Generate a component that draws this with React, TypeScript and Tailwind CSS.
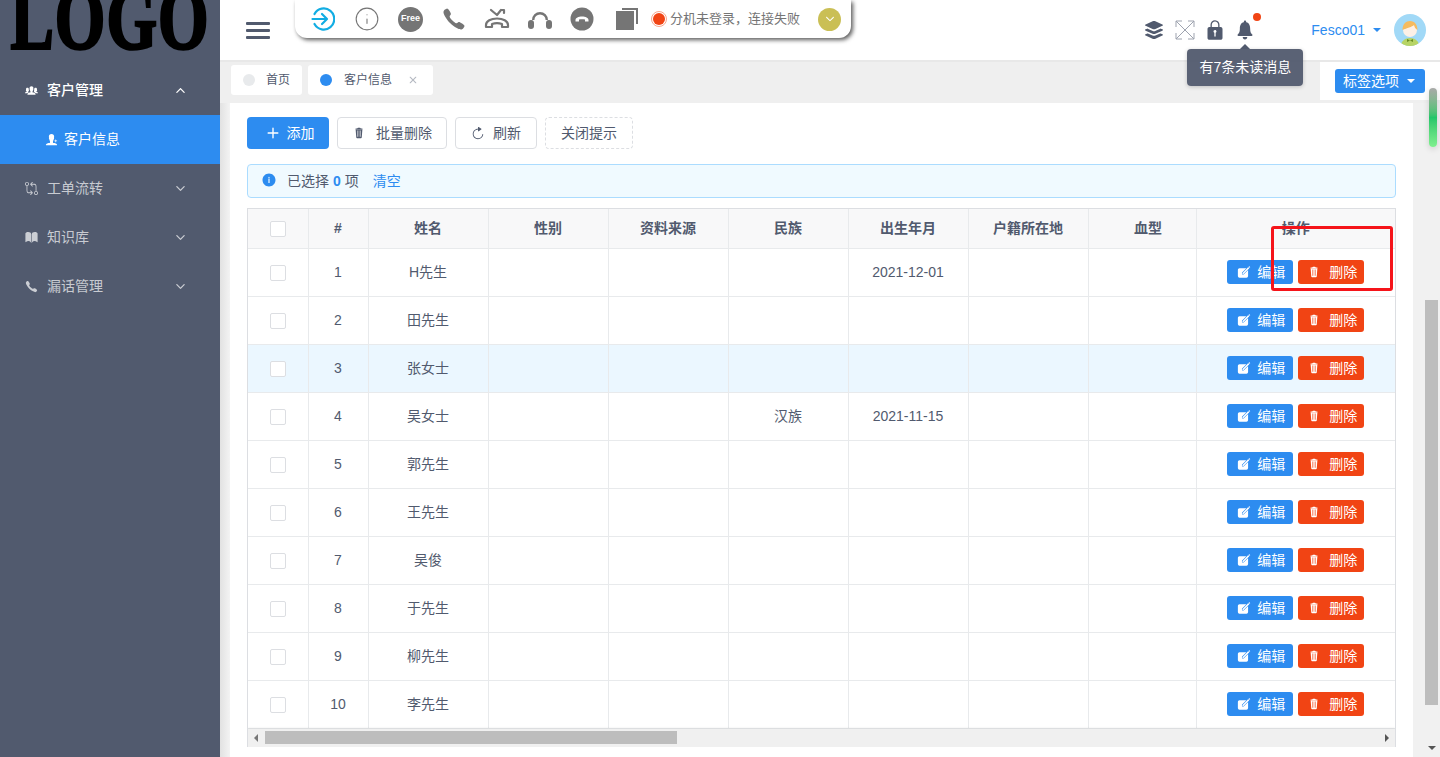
import { Info, Copy } from 'lucide-react';
import {
  IoIosAdd,
  IoIosApps,
  IoIosArrowDown,
  IoIosArrowUp,
  IoIosBook,
  IoIosCall,
  IoIosClose,
  IoIosCreate,
  IoIosGitCompare,
  IoIosInformationCircle,
  IoIosLock,
  IoIosNotifications,
  IoIosPeople,
  IoIosPersonAdd,
  IoIosRefresh,
  IoIosTrash,
  IoMdArrowDropdown,
} from 'react-icons/io';

const rows = [
  { id: 1, name: 'H先生', nation: '', birth: '2021-12-01' },
  { id: 2, name: '田先生', nation: '', birth: '' },
  { id: 3, name: '张女士', nation: '', birth: '' },
  { id: 4, name: '吴女士', nation: '汉族', birth: '2021-11-15' },
  { id: 5, name: '郭先生', nation: '', birth: '' },
  { id: 6, name: '王先生', nation: '', birth: '' },
  { id: 7, name: '吴俊', nation: '', birth: '' },
  { id: 8, name: '于先生', nation: '', birth: '' },
  { id: 9, name: '柳先生', nation: '', birth: '' },
  { id: 10, name: '李先生', nation: '', birth: '' },
];

const menu = [
  { label: '工单流转', icon: IoIosGitCompare },
  { label: '知识库', icon: IoIosBook },
  { label: '漏话管理', icon: IoIosCall },
];

const cell = 'border-r border-b border-[#e8eaec] text-center';
const nameShadow = 'relative z-10 shadow-[3px_0_5px_-1px_rgba(0,0,0,0.16)]';
const opShadow = 'relative z-10 shadow-[-3px_0_5px_-1px_rgba(0,0,0,0.16)] bg-clip-padding';

function Checkbox() {
  return <span className="inline-block w-4 h-4 align-middle bg-white border border-[#dcdee2] rounded-[2px]" />;
}

function Sidebar() {
  return (
    <aside className="w-[220px] shrink-0 h-full bg-[#515a6e]">
      <div className="h-[66px] overflow-hidden flex justify-center">
        <span className="font-['Liberation_Serif',serif] font-bold text-black text-[65px] leading-[56px] h-[56px] tracking-[1px] scale-y-[1.38] origin-bottom [-webkit-text-stroke:2px_black]">
          LOGO
        </span>
      </div>
      <div className="h-[49px] flex items-center pl-6 pr-[33px] text-white font-medium">
        <IoIosPeople size={15} />
        <span className="ml-2 flex-1">客户管理</span>
        <IoIosArrowUp size={13} />
      </div>
      <div className="h-[49px] flex items-center pl-[44px] bg-[#2d8cf0] text-white">
        <IoIosPersonAdd size={15} />
        <span className="ml-[5px]">客户信息</span>
      </div>
      {menu.map((item) => (
        <div key={item.label} className="h-[49px] flex items-center pl-6 pr-[33px] text-white/70">
          <item.icon size={15} />
          <span className="ml-2 flex-1">{item.label}</span>
          <IoIosArrowDown size={13} />
        </div>
      ))}
    </aside>
  );
}

function SoftPhoneBar() {
  return (
    <div className="self-start flex items-center w-[556px] h-[38px] ml-[25px] pl-[6px] bg-white rounded-b-[12px] shadow-[2px_2px_4px_rgba(0,0,0,0.65)] text-[#757575]">
      <span className="w-[44px] flex justify-center">
        <svg width="24" height="24" viewBox="0 0 24 24" fill="none" stroke="#12ade3" strokeWidth="2.2" strokeLinecap="round" strokeLinejoin="round">
          <path d="M3.5 7a10.5 10.5 0 1 1 0 10" />
          <path d="M1.5 12h14M11 7l5 5-5 5" />
        </svg>
      </span>
      <span className="w-[44px] flex justify-center">
        <Info size={26} strokeWidth={1} />
      </span>
      <span className="w-[43px] flex justify-center">
        <span className="w-[25px] h-[25px] rounded-full bg-[#757575] text-white text-[9px] font-bold flex items-center justify-center">Free</span>
      </span>
      <span className="w-[43px] flex justify-center">
        <IoIosCall size={28} />
      </span>
      <span className="w-[44px] flex justify-center">
        <svg width="26" height="24" viewBox="0 0 26 24" fill="none" stroke="currentColor" strokeWidth="2.2" strokeLinecap="round" strokeLinejoin="round">
          <path d="M2 18c0-4 5-6.5 11-6.5s11 2.500 11 6.500v2h-6v-3c-3-1-7-1-10 0v3H2z" />
          <path d="M7 3l6 5 4-5M17 3h3v3" />
        </svg>
      </span>
      <span className="w-[42px] flex justify-center">
        <svg width="26" height="24" viewBox="0 0 26 24" fill="currentColor">
          <path d="M5 13a8 8 0 0 1 16 0h-2.400a5.600 5.600 0 0 0-11.200 0z" />
          <rect x="1" y="13" width="6" height="9" rx="3" />
          <rect x="19" y="13" width="6" height="9" rx="3" />
        </svg>
      </span>
      <span className="w-[41px] flex justify-center">
        <svg width="24" height="24" viewBox="0 0 24 24">
          <circle cx="12" cy="12" r="11.500" fill="currentColor" />
          <path d="M5.500 13c0-2 3-3.500 6.500-3.500s6.500 1.500 6.500 3.500v1.500h-3.500v-2c-2-.5-4-.5-6 0v2H5.500z" fill="#fff" />
        </svg>
      </span>
      <span className="w-[49px] flex justify-center">
        <svg width="22" height="22" viewBox="0 0 22 22" fill="currentColor">
          <path d="M6 0h16v16h-2V2H6z" />
          <rect x="0" y="3" width="18" height="19" />
        </svg>
      </span>
      <span className="ml-[2px] w-3 h-3 rounded-full bg-[#f14414] outline outline-1 outline-offset-[1px] outline-[#f9a58d]" />
      <span className="ml-[5px] text-[13px] w-[140px] whitespace-nowrap">分机未登录，连接失败</span>
      <span className="ml-[8px] w-[23px] h-[23px] rounded-full bg-[#cabf55] flex items-center justify-center text-white">
        <IoIosArrowDown size={12} />
      </span>
    </div>
  );
}

function Avatar() {
  return (
    <svg width="32" height="32" viewBox="0 0 32 32" className="rounded-full">
      <rect width="32" height="32" fill="#a1d9f7" />
      <path d="M7 32c0-5 4-8 9-8s9 3 9 8z" fill="#b7d465" />
      <circle cx="16" cy="16" r="7" fill="#fdf0e6" />
      <path d="M8.500 16c0-6 3.500-9 7.500-9 5 0 7.500 4 7.500 9-2-1-3-3-3.500-5-2 2-7 3-11.500 5z" fill="#f5bb5f" />
      <path d="M13 25l3 1.500 3-1.500v3l-3-1.500-3 1.500z" fill="#6b8e23" />
    </svg>
  );
}

function Header() {
  return (
    <header className="relative z-30 h-[62px] shrink-0 flex items-center bg-white border-b-2 border-[#e8e8e8]">
      <div className="ml-[26px] w-[24px] flex flex-col gap-[4px]">
        <span className="h-[3px] bg-[#515a6e] rounded-[1px]" />
        <span className="h-[3px] bg-[#515a6e] rounded-[1px]" />
        <span className="h-[3px] bg-[#515a6e] rounded-[1px]" />
      </div>
      <SoftPhoneBar />
      <div className="ml-auto flex items-center text-[#515a6e]">
        <IoIosApps size={24} />
        <svg width="20" height="20" viewBox="0 0 20 20" fill="none" stroke="#9ea3af" strokeWidth="1" className="ml-[9px]">
          <path d="M1 1l18 18M19 1L1 19M1 7V1h6M13 1h6v6M1 13v6h6M19 13v6h-6" />
        </svg>
        <IoIosLock size={24} className="ml-[8px]" />
        <div className="relative ml-[6px]">
          <IoIosNotifications size={24} />
          <span className="absolute -top-[5px] right-[-4px] w-2 h-2 rounded-full bg-[#f14414]" />
          <div className="absolute top-[31px] left-1/2 -translate-x-1/2 w-[116px] h-[37px] flex items-center justify-center rounded-[4px] bg-[#515a6e]/95 text-white text-[14px] whitespace-nowrap shadow-[0_1px_4px_rgba(0,0,0,0.2)]">
            有7条未读消息
            <span className="absolute -top-[5px] left-1/2 -ml-[5px] w-0 h-0 border-x-[5px] border-x-transparent border-b-[5px] border-b-[#515a6e]" />
          </div>
        </div>
        <span className="ml-[54px] text-[14px] text-[#2d8cf0]">Fesco01</span>
        <IoMdArrowDropdown size={16} className="ml-[4px] text-[#2d8cf0]" />
        <span className="ml-[9px] mr-[14px] flex">
          <Avatar />
        </span>
      </div>
    </header>
  );
}

function TabsBar() {
  return (
    <div className="h-[41px] shrink-0 flex items-start bg-[#efefef]">
      <div className="mt-[3px] ml-[11px] flex gap-[6px] text-[12px] text-[#515a6e]">
        <div className="w-[71px] h-[30px] flex items-center pl-3 bg-white rounded-[3px]">
          <span className="w-3 h-3 rounded-full bg-[#e8eaec]" />
          <span className="ml-[11px]">首页</span>
        </div>
        <div className="w-[125px] h-[30px] flex items-center pl-3 bg-white rounded-[3px]">
          <span className="w-3 h-3 rounded-full bg-[#2d8cf0]" />
          <span className="ml-3">客户信息</span>
          <IoIosClose size={18} className="ml-3 text-[#b5b9c2]" />
        </div>
      </div>
      <div className="ml-auto w-[120px] h-[38px] flex items-center pl-[15px] bg-white">
        <button className="w-[90px] h-[24px] flex items-center pl-2 rounded-[3px] bg-[#2d8cf0] text-white text-[14px]">
          标签选项
          <IoMdArrowDropdown size={16} className="ml-[4px]" />
        </button>
      </div>
    </div>
  );
}

function CustomerTable() {
  return (
    <div className="mt-[10px] border-t border-l border-r border-[#dcdee2] text-[14px] text-[#515a6e] overflow-hidden">
      <table className="w-full table-fixed border-collapse-separate">
        <colgroup>
          <col className="w-[60px]" />
          <col className="w-[60px]" />
          <col className="w-[120px]" />
          <col className="w-[120px]" />
          <col className="w-[120px]" />
          <col className="w-[120px]" />
          <col className="w-[120px]" />
          <col className="w-[120px]" />
          <col className="w-[108px]" />
          <col className="w-[199px]" />
        </colgroup>
        <thead>
          <tr className="h-[39px] bg-[#f8f8f9] font-bold">
            <th className={cell}><Checkbox /></th>
            <th className={cell}>#</th>
            <th className={`${cell} ${nameShadow} bg-[#f8f8f9]`}>姓名</th>
            <th className={cell}>性别</th>
            <th className={cell}>资料来源</th>
            <th className={cell}>民族</th>
            <th className={cell}>出生年月</th>
            <th className={cell}>户籍所在地</th>
            <th className={`${cell} pl-3`}>血型</th>
            <th className={`${cell} ${opShadow} bg-[#f8f8f9] border-r-0`}>操作</th>
          </tr>
        </thead>
        <tbody>
          {rows.map((row) => {
            const bg = row.id === 3 ? 'bg-[#ebf7ff]' : 'bg-white';
            return (
              <tr key={row.id} className={`h-[48px] ${bg}`}>
                <td className={cell}><Checkbox /></td>
                <td className={cell}>{row.id}</td>
                <td className={`${cell} ${nameShadow} ${bg}`}>{row.name}</td>
                <td className={cell} />
                <td className={cell} />
                <td className={cell}>{row.nation}</td>
                <td className={cell}>{row.birth}</td>
                <td className={cell} />
                <td className={cell} />
                <td className={`${cell} ${opShadow} ${bg} border-r-0`}>
                  <div className="flex justify-center gap-[5px]">
                    <button className="w-[66px] h-[24px] flex items-center pl-[10px] rounded-[3px] bg-[#2d8cf0] text-white">
                      <IoIosCreate size={14} />
                      <span className="ml-[6px]">编辑</span>
                    </button>
                    <button className="w-[66px] h-[24px] flex items-center pl-[9px] rounded-[3px] bg-[#f14414] text-white">
                      <IoIosTrash size={14} />
                      <span className="ml-[8px]">删除</span>
                    </button>
                  </div>
                </td>
              </tr>
            );
          })}
        </tbody>
      </table>
      <div className="h-[18px] flex items-center bg-[#f0f0f0] relative z-20 shadow-[0_-1px_2px_rgba(0,0,0,0.08)]">
        <span className="ml-[6px] w-0 h-0 border-y-[4px] border-y-transparent border-r-[4px] border-r-[#777]" />
        <span className="ml-[7px] w-[412px] h-[13px] bg-[#bdbdbd]" />
        <span className="ml-auto mr-[6px] w-0 h-0 border-y-[4px] border-y-transparent border-l-[4px] border-l-[#555]" />
      </div>
    </div>
  );
}

export default function App() {
  return (
    <div className="relative flex h-[757px] w-[1440px] overflow-hidden bg-white font-['Liberation_Sans','Noto_Sans_CJK_SC',sans-serif] text-[14px]">
      <Sidebar />
      <main className="flex-1 min-w-0 flex flex-col">
        <Header />
        <TabsBar />
        <div className="flex-1 min-h-0 flex">
          <div className="w-[10px] shrink-0 bg-gradient-to-r from-[#e2e2e2] to-[#f3f3f3]" />
          <section className="flex-1 min-w-0 pt-[14px] pl-[17px] pr-[17px] bg-white">
            <div className="flex gap-2 text-[14px] text-[#515a6e]">
              <button className="w-[82px] h-[32px] flex items-center justify-center rounded-[4px] bg-[#2d8cf0] text-white">
                <IoIosAdd size={22} />
                <span className="ml-[3px]">添加</span>
              </button>
              <button className="w-[110px] h-[32px] flex items-center justify-center rounded-[4px] border border-[#dcdee2]">
                <IoIosTrash size={14} />
                <span className="ml-[10px]">批量删除</span>
              </button>
              <button className="w-[82px] h-[32px] flex items-center justify-center rounded-[4px] border border-[#dcdee2]">
                <IoIosRefresh size={14} />
                <span className="ml-[8px]">刷新</span>
              </button>
              <button className="w-[88px] h-[32px] flex items-center justify-center rounded-[4px] border border-dashed border-[#dcdee2]">
                关闭提示
              </button>
            </div>
            <div className="mt-[15px] h-[34px] flex items-center pl-[13px] rounded-[4px] bg-[#f0faff] border border-[#abdcff] text-[#515a6e]">
              <IoIosInformationCircle size={16} className="text-[#2d8cf0] -mt-[3px]" />
              <span className="ml-[10px]">已选择</span>
              <span className="ml-[4px] font-bold text-[#2d8cf0]">0</span>
              <span className="ml-[4px]">项</span>
              <span className="ml-[14px] text-[#2d8cf0]">清空</span>
            </div>
            <CustomerTable />
          </section>
          <div className="w-[27px] shrink-0 flex flex-col bg-[#f1f1f1]">
            <span className="mt-[197px] ml-[12px] w-[13px] h-[405px] bg-[#bdbdbd]" />
            <span className="mt-auto mb-[7px] ml-[15px] w-0 h-0 border-x-[4px] border-x-transparent border-t-[4px] border-t-[#555]" />
          </div>
        </div>
      </main>
      {/* red annotation box over the screenshot */}
      <div className="absolute left-[1271px] top-[226px] w-[122px] h-[65px] border-[3px] border-[#f5141a] rounded-[3px] z-40" />
      {/* floating scroll indicator */}
      <div className="absolute left-[1429px] top-[88px] w-[8px] h-[59px] rounded-full z-40 bg-gradient-to-b from-[#a9a9a9] via-[#21c66a] to-[#7ff08f] shadow-[0_2px_6px_rgba(0,0,0,0.15)]" />
    </div>
  );
}
